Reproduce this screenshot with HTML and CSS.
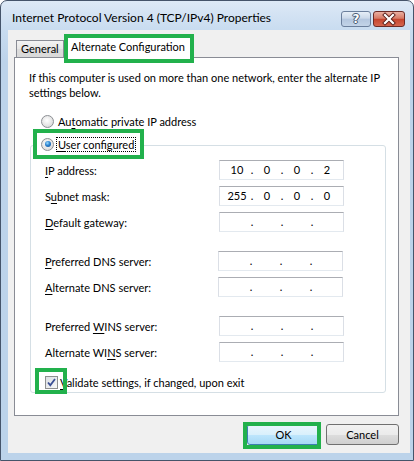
FILE: index.html
```html
<!DOCTYPE html>
<html>
<head>
<meta charset="utf-8">
<link rel="stylesheet" href="styles.css">
</head>
<body>
<div class="window">
  <div class="titlebar">
    <div class="title">Internet Protocol Version 4 (TCP/IPv4) Properties</div>
    <div class="caption-buttons">
      <div class="cap-btn help"><span>?</span></div>
      <div class="cap-btn close">
        <svg width="32" height="16" viewBox="0 0 32 16">
          <path d="M12 4 L20 12 M20 4 L12 12" stroke="#5a1f1a" stroke-width="4" stroke-linecap="square" fill="none"/>
          <path d="M12 4 L20 12 M20 4 L12 12" stroke="#ffffff" stroke-width="2.2" stroke-linecap="square" fill="none"/>
        </svg>
      </div>
    </div>
  </div>
  <div class="client">
    <div class="tabs">
      <div class="tab">General</div>
      <div class="tab active">Alternate Configuration</div>
    </div>
    <div class="panel">
      <p class="intro">If this computer is used on more than one network, enter the alternate IP<br>settings below.</p>
      <div class="option">
        <span class="radio"></span>
        <span class="opt-label">Au<u>t</u>omatic private IP address</span>
      </div>
      <div class="option caption">
        <span class="radio checked"></span>
        <span class="opt-label focus"><u>U</u>ser configured</span>
      </div>
      <div class="group">
        <div class="rows">
          <div class="row"><span class="lbl"><u>I</u>P address:</span><div class="ipfield"><span>10</span><i>.</i><span>0</span><i>.</i><span>0</span><i>.</i><span>2</span></div></div>
          <div class="row"><span class="lbl">S<u>u</u>bnet mask:</span><div class="ipfield"><span>255</span><i>.</i><span>0</span><i>.</i><span>0</span><i>.</i><span>0</span></div></div>
          <div class="row"><span class="lbl"><u>D</u>efault gateway:</span><div class="ipfield"><span></span><i>.</i><span></span><i>.</i><span></span><i>.</i><span></span></div></div>
          <div class="row sep dns"><span class="lbl"><u>P</u>referred DNS server:</span><div class="ipfield"><span></span><i>.</i><span></span><i>.</i><span></span><i>.</i><span></span></div></div>
          <div class="row dns"><span class="lbl"><u>A</u>lternate DNS server:</span><div class="ipfield"><span></span><i>.</i><span></span><i>.</i><span></span><i>.</i><span></span></div></div>
          <div class="row sep"><span class="lbl">Preferred <u>W</u>INS server:</span><div class="ipfield"><span></span><i>.</i><span></span><i>.</i><span></span><i>.</i><span></span></div></div>
          <div class="row"><span class="lbl">Alternate WI<u>N</u>S server:</span><div class="ipfield"><span></span><i>.</i><span></span><i>.</i><span></span><i>.</i><span></span></div></div>
        </div>
        <div class="check-row">
          <span class="checkbox">
            <svg width="11" height="11" viewBox="0 0 11 11"><path d="M2 5.5 L4.3 8.2 L9 2" stroke="#3b4f94" stroke-width="1.8" fill="none"/></svg>
            <span class="highlight"></span>
          </span>
          <span class="check-label"><u>V</u>alidate settings, if changed, upon exit</span>
        </div>
      </div>
    </div>
    <div class="buttons">
      <div class="btn default">OK<span class="highlight"></span></div>
      <div class="btn">Cancel</div>
    </div>
  </div>
</div>
</body>
</html>
```

FILE: styles.css
```css
html, body {
  margin: 0;
  padding: 0;
  background: #ffffff;
}
body {
  font-family: Lato, "Noto Sans", sans-serif;
  font-size: 11px;
  color: #000;
}
u { text-decoration: underline; text-underline-offset: 2px; text-decoration-thickness: 1px; }

.window {
  width: 414px;
  height: 461px;
  box-sizing: border-box;
  border: 1px solid #45546a;
  border-radius: 7px 7px 0 0;
  background: linear-gradient(#dde9f6 0px, #c9dcf0 28px, #bdd3ea 60px, #bcd3ea 100%);
  display: flex;
  flex-direction: column;
  overflow: hidden;
}

.titlebar {
  height: 29px;
  display: flex;
  align-items: flex-start;
  flex-shrink: 0;
}
.title {
  padding-left: 11px;
  padding-top: 8px;
  font-size: 12px;
  line-height: 17px;
  color: #000;
  white-space: nowrap;
}
.caption-buttons {
  margin-left: auto;
  margin-right: 8px;
  margin-top: 10px;
  display: flex;
  gap: 2px;
}
.cap-btn {
  height: 16px;
  box-sizing: border-box;
  border-radius: 3px;
  display: flex;
  align-items: center;
  justify-content: center;
}
.cap-btn.help {
  width: 30px;
  border: 1px solid #6b7f9c;
  background: linear-gradient(#e6eef7 0%, #cad8e9 45%, #b3c6de 50%, #c3d4e8 100%);
}
.cap-btn.help span {
  font-family: "DejaVu Sans", sans-serif;
  font-weight: bold;
  font-size: 12px;
  line-height: 14px;
  color: #ffffff;
  text-shadow: 0 0 1px #3c4e68, 0 0 1px #3c4e68, 1px 0 0 #52637c, -1px 0 0 #52637c, 0 1px 0 #52637c, 0 -1px 0 #52637c;
}
.cap-btn.close {
  width: 32px;
  border: 1px solid #6c2a25;
  background: linear-gradient(#eab0a2 0%, #d77a66 45%, #c6452e 52%, #d5664f 100%);
}
.cap-btn.close svg { display: block; margin: -1px; }

.client {
  flex: 1;
  margin: 0 3px 7px 7px;
  background: #f0f0f0;
  padding: 4px 11px 0 6px;
  display: flex;
  flex-direction: column;
}

.tabs {
  display: flex;
  align-items: flex-end;
  height: 23px;
  padding-left: 2px;
  position: relative;
  z-index: 2;
}
.tab {
  box-sizing: border-box;
  height: 17px;
  width: 48px;
  border: 1px solid #898c95;
  border-bottom: none;
  background: linear-gradient(#f3f3f3, #e6e6e6 50%, #dcdcdc 51%, #d9d9d9);
  line-height: 16px;
  padding-left: 4px;
  white-space: nowrap;
}
.tab.active {
  width: 130px;
  height: 29px;
  margin-bottom: -6px;
  border: 4px solid #22b14c;
  background: #ffffff;
  padding-left: 3px;
  line-height: 17px;
  padding-top: 0;
}

.panel {
  box-sizing: border-box;
  height: 359px;
  border: 1px solid #898c95;
  background: #ffffff;
  padding: 12px 12px 0 14px;
  position: relative;
  z-index: 1;
}

.intro {
  margin: 0;
  line-height: 15px;
  white-space: nowrap;
}

.option {
  display: flex;
  align-items: center;
  height: 15px;
  line-height: 15px;
  margin-top: 14px;
  padding-left: 12px;
}
.radio {
  width: 13px;
  height: 13px;
  box-sizing: border-box;
  border-radius: 50%;
  border: 1px solid #8c8f94;
  background: radial-gradient(circle at 45% 40%, #ffffff 0%, #eaeaea 45%, #cfcfcf 100%);
  position: relative;
  flex-shrink: 0;
}
.radio.checked::after {
  content: "";
  position: absolute;
  left: 2.5px;
  top: 2.5px;
  width: 6px;
  height: 6px;
  border-radius: 50%;
  background: radial-gradient(circle at 40% 35%, #9adcff 0%, #2b82cf 45%, #134c8c 100%);
}
.opt-label {
  margin-left: 4px;
  white-space: nowrap;
}

.option.caption {
  margin-top: 0;
  margin-left: 4px;
  width: 111px;
  height: 30px;
  box-sizing: border-box;
  border: 4px solid #22b14c;
  background: #ffffff;
  padding-left: 4px;
  position: relative;
  z-index: 2;
}
.opt-label.focus {
  margin-left: 3px;
  outline: 1px dotted #000;
  outline-offset: 0px;
  padding: 0 1px;
  line-height: 13px;
}

.group {
  box-sizing: border-box;
  width: 356px;
  margin-left: 1px;
  margin-top: -14px;
  border: 1px solid #d5dfe5;
  border-radius: 3px;
  padding: 14px 0 2px 14px;
}
.rows {
  display: flex;
  flex-direction: column;
  gap: 6px;
}
.row {
  display: grid;
  grid-template-columns: 174px 125px;
  align-items: center;
  height: 20px;
}
.row.sep { margin-top: 13px; }
.row.dns .ipfield { margin-left: -1px; }
.lbl { white-space: nowrap; }

.ipfield {
  box-sizing: border-box;
  width: 125px;
  height: 20px;
  border: 1px solid #dbdfe6;
  border-top-color: #abadb3;
  border-bottom-color: #e3e9ef;
  display: flex;
  align-items: center;
  padding-left: 4px;
  line-height: 18px;
}
.ipfield span {
  width: 26px;
  text-align: center;
}
.ipfield i {
  font-style: normal;
  width: 4px;
  text-align: center;
}

.check-row {
  display: flex;
  align-items: center;
  height: 15px;
  line-height: 15px;
  margin-top: 13px;
}
.checkbox {
  position: relative;
  width: 13px;
  height: 13px;
  box-sizing: border-box;
  border: 1px solid #8e8f8f;
  background: linear-gradient(135deg, #dcdfe4, #f7f7f7);
  display: flex;
  align-items: center;
  justify-content: center;
  flex-shrink: 0;
}
.checkbox svg { display: block; }
.checkbox .highlight {
  position: absolute;
  left: -11px;
  top: -9px;
  width: 32px;
  height: 26px;
}
.highlight {
  box-sizing: border-box;
  border: 4px solid #22b14c;
}
.check-label {
  margin-left: 2px;
  white-space: nowrap;
}

.buttons {
  display: flex;
  justify-content: flex-end;
  gap: 6px;
  margin-top: 8px;
}
.btn {
  position: relative;
  box-sizing: border-box;
  width: 73px;
  height: 21px;
  border: 1px solid #707070;
  border-radius: 3px;
  background: linear-gradient(#f2f2f2 0%, #ebebeb 50%, #dddddd 51%, #cfcfcf 100%);
  display: flex;
  align-items: center;
  justify-content: center;
  line-height: 19px;
}
.btn.default {
  border-color: #3c7fb1;
  background: linear-gradient(#eaf6fd 0%, #d9f0fc 50%, #bee6fd 51%, #a7d9f5 100%);
}
.btn .highlight {
  position: absolute;
  left: -5px;
  top: -3px;
  width: 78px;
  height: 27px;
}
```
